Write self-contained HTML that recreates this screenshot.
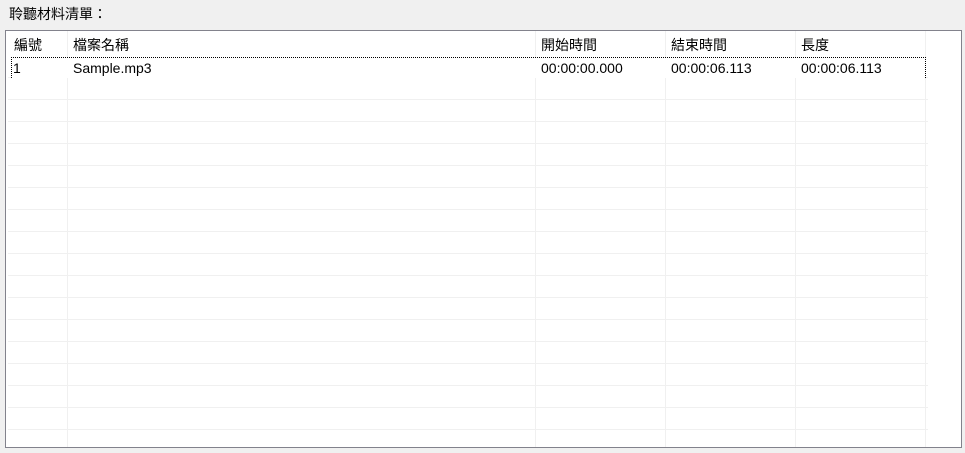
<!DOCTYPE html><html><head><style>
body{margin:0;width:965px;height:453px;background:#f0f0f0;position:relative;overflow:hidden;font-family:"Liberation Sans","Noto Sans CJK TC",sans-serif;font-size:14px;color:#000}
.a{position:absolute}
.box{left:5px;top:30px;width:955px;height:416px;border:1px solid #82828c;background:#fff}
.v{position:absolute;top:0;width:1px;height:416px;background:#f0f0f0}
.h{position:absolute;left:2px;height:1px;width:920px;background:#f0f0f0}
.t{position:absolute;white-space:nowrap;line-height:16px}
</style></head><body>
<div class="a t" style="left:9px;top:6px">聆聽材料清單：</div>
<div class="a box">
<div class="v" style="left:61px"></div>
<div class="v" style="left:529px"></div>
<div class="v" style="left:659px"></div>
<div class="v" style="left:789px"></div>
<div class="v" style="left:919px"></div>
<div class="h" style="top:46px"></div>
<div class="h" style="top:68px"></div><div class="h" style="top:90px"></div><div class="h" style="top:112px"></div><div class="h" style="top:134px"></div><div class="h" style="top:156px"></div><div class="h" style="top:178px"></div><div class="h" style="top:200px"></div><div class="h" style="top:222px"></div><div class="h" style="top:244px"></div><div class="h" style="top:266px"></div><div class="h" style="top:288px"></div><div class="h" style="top:310px"></div><div class="h" style="top:332px"></div><div class="h" style="top:354px"></div><div class="h" style="top:376px"></div><div class="h" style="top:398px"></div>
<div style="position:absolute;left:5px;top:26px;width:913px;height:20px;border:1px dotted #000;border-bottom:none;background:#fff"></div>
<div class="t" style="left:8px;top:6px">編號</div>
<div class="t" style="left:67px;top:6px">檔案名稱</div>
<div class="t" style="left:535px;top:6px">開始時間</div>
<div class="t" style="left:665px;top:6px">結束時間</div>
<div class="t" style="left:795px;top:6px">長度</div>
<div class="t" style="left:7px;top:29px">1</div>
<div class="t" style="left:67px;top:29px">Sample.mp3</div>
<div class="t" style="left:535px;top:29px">00:00:00.000</div>
<div class="t" style="left:665px;top:29px">00:00:06.113</div>
<div class="t" style="left:795px;top:29px">00:00:06.113</div>
</div>
</body></html>
